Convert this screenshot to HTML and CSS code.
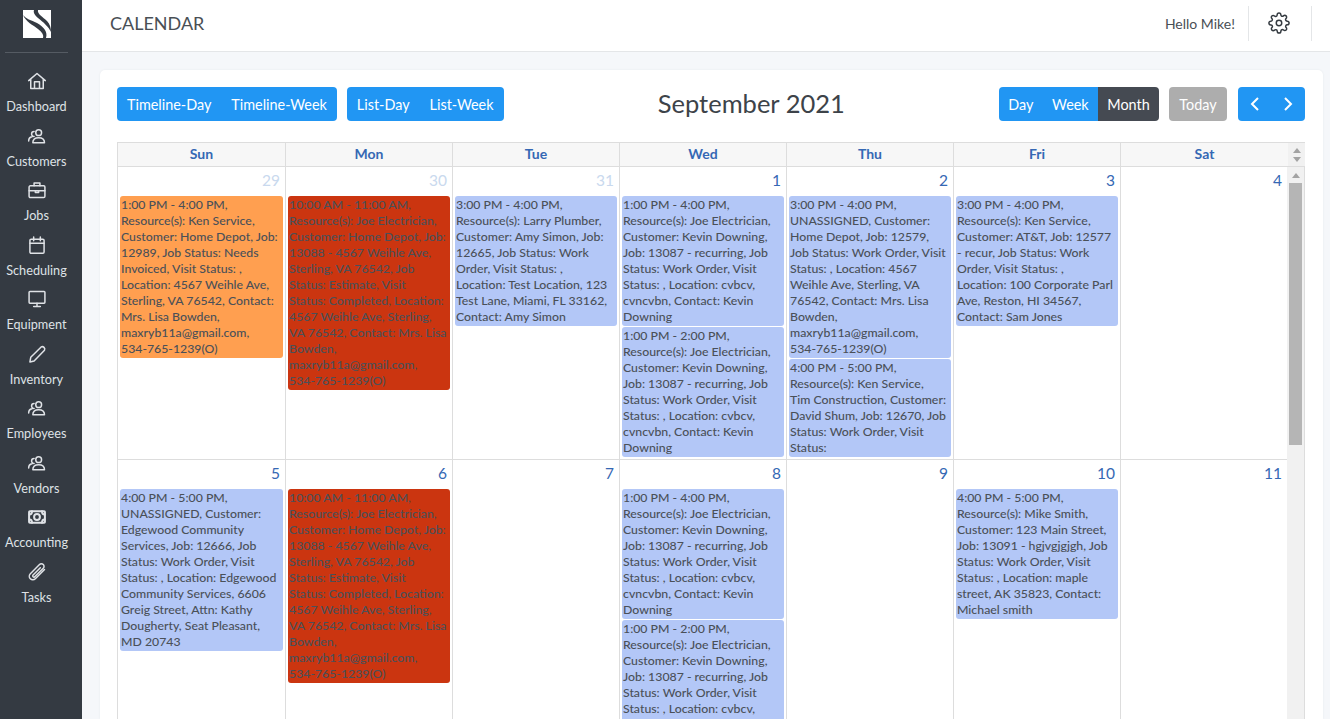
FILE: index.html
```html
<!DOCTYPE html>
<html lang="en">
<head>
<meta charset="utf-8">
<title>Calendar</title>
<link rel="stylesheet" href="styles.css">
</head>
<body>
<div class="app">
  <aside class="sidebar">
    <div class="logo">
      <svg viewBox="0 0 28 28" width="28" height="28"><rect width="28" height="28" fill="#fff"/><path d="M0 5C3 12 10 15 15 19C19 22 21 25 20 28H23C25 22 21 17 14 13C8 10 3 9 0 5Z" fill="#343a42"/><path d="M11 0H15C14 4 20 7 24 11C27 14 28 18 28 22C26 17 20 12 15 8C12 5 10 3 11 0Z" fill="#343a42"/></svg>
    </div>
    <nav class="nav">
      <a class="item"><svg viewBox="0 0 24 24" class="ico"><path d="M2 11.500 12 3l10 8.500M4.500 9.500V21h15V9.500M9 21v-8h6v8"/></svg><span>Dashboard</span></a>
      <a class="item"><svg viewBox="0 0 24 24" class="ico"><circle cx="14" cy="8" r="3.500"/><path d="M7 20c0-4 3-6 7-6s7 2 7 6H7M8.500 12.500a3 3 0 0 1 0-6M2 18c0-3 1.500-4.500 4-5"/></svg><span>Customers</span></a>
      <a class="item"><svg viewBox="0 0 24 24" class="ico"><rect x="2.500" y="7" width="19" height="14" rx="1.500"/><path d="M8.500 7V3.500h7V7M2.500 13h19M10 13v2h4v-2"/></svg><span>Jobs</span></a>
      <a class="item"><svg viewBox="0 0 24 24" class="ico"><rect x="3.500" y="5" width="17" height="17" rx="1.500"/><path d="M3.500 10h17M8 2.500V7M16 2.500V7"/></svg><span>Scheduling</span></a>
      <a class="item"><svg viewBox="0 0 24 24" class="ico"><rect x="2.500" y="3" width="19" height="14" rx="1"/><path d="M12 17v4M8 21h8"/></svg><span>Equipment</span></a>
      <a class="item"><svg viewBox="0 0 24 24" class="ico"><path d="M3.500 21.500l1-5.500L17 3.500a3 3 0 0 1 4 4L8.500 20.500l-5 1Z"/></svg><span>Inventory</span></a>
      <a class="item"><svg viewBox="0 0 24 24" class="ico"><circle cx="14" cy="8" r="3.500"/><path d="M7 20c0-4 3-6 7-6s7 2 7 6H7M8.500 12.500a3 3 0 0 1 0-6M2 18c0-3 1.500-4.500 4-5"/></svg><span>Employees</span></a>
      <a class="item"><svg viewBox="0 0 24 24" class="ico"><circle cx="14" cy="8" r="3.500"/><path d="M7 20c0-4 3-6 7-6s7 2 7 6H7M8.500 12.500a3 3 0 0 1 0-6M2 18c0-3 1.500-4.500 4-5"/></svg><span>Vendors</span></a>
      <a class="item"><svg viewBox="0 0 24 24" class="ico bill"><rect x="2.500" y="5" width="19" height="14" rx="1"/><circle cx="12" cy="12" r="3.500"/><path d="M3 9c2 0 3-1 3-4M21 9c-2 0-3-1-3-4M3 15c2 0 3 1 3 4M21 15c-2 0-3 1-3 4"/></svg><span>Accounting</span></a>
      <a class="item"><svg viewBox="0 0 24 24" class="ico"><path d="M21 9 10 20a4 4 0 0 1-6-6L15 3a3 3 0 0 1 4.500 4.500L9 18a1.500 1.500 0 0 1-2-2L16 7"/></svg><span>Tasks</span></a>
    </nav>
  </aside>
  <main class="main">
    <header class="topbar">
      <h1 class="title">CALENDAR</h1>
      <div class="user">
        <span class="hello">Hello Mike!</span>
        <span class="gear"><svg viewBox="0 0 24 24" width="22" height="22" fill="none" stroke="#343a40" stroke-width="1.600" stroke-linejoin="round"><circle cx="12" cy="12" r="3"/><path d="M19.4 15a1.65 1.65 0 0 0 .33 1.82l.06.06a2 2 0 0 1 0 2.83 2 2 0 0 1-2.83 0l-.06-.06a1.65 1.65 0 0 0-1.82-.33 1.65 1.65 0 0 0-1 1.51V21a2 2 0 0 1-2 2 2 2 0 0 1-2-2v-.09A1.65 1.65 0 0 0 9 19.4a1.65 1.65 0 0 0-1.82.33l-.06.06a2 2 0 0 1-2.83 0 2 2 0 0 1 0-2.83l.06-.06a1.65 1.65 0 0 0 .33-1.82 1.65 1.65 0 0 0-1.51-1H3a2 2 0 0 1-2-2 2 2 0 0 1 2-2h.09A1.65 1.65 0 0 0 4.600 9a1.65 1.65 0 0 0-.33-1.82l-.06-.06a2 2 0 0 1 0-2.83 2 2 0 0 1 2.830 0l.06.06a1.65 1.65 0 0 0 1.82.33H9a1.65 1.65 0 0 0 1-1.51V3a2 2 0 0 1 2-2 2 2 0 0 1 2 2v.09a1.65 1.65 0 0 0 1 1.51 1.65 1.65 0 0 0 1.82-.33l.06-.06a2 2 0 0 1 2.83 0 2 2 0 0 1 0 2.83l-.06.06a1.65 1.65 0 0 0-.33 1.82V9a1.65 1.65 0 0 0 1.51 1H21a2 2 0 0 1 2 2 2 2 0 0 1-2 2h-.09a1.65 1.65 0 0 0-1.51 1z"/></svg></span>
      </div>
    </header>
    <section class="content">
      <div class="card">
        <div class="toolbar">
          <div class="tgroup">
            <div class="btns"><button class="btn">Timeline-Day</button><button class="btn">Timeline-Week</button></div>
            <div class="btns"><button class="btn">List-Day</button><button class="btn">List-Week</button></div>
          </div>
          <h2 class="month">September 2021</h2>
          <div class="tgroup">
            <div class="btns views"><button class="btn">Day</button><button class="btn">Week</button><button class="btn active">Month</button></div>
            <button class="btn today">Today</button>
            <div class="btns"><button class="btn arrow"><svg viewBox="0 0 12 16" width="12" height="16"><path d="M9 2 3 8l6 6" fill="none" stroke="#fff" stroke-width="2"/></svg></button><button class="btn arrow"><svg viewBox="0 0 12 16" width="12" height="16"><path d="M3 2l6 6-6 6" fill="none" stroke="#fff" stroke-width="2"/></svg></button></div>
          </div>
        </div>
        <div class="cal">
          <div class="head">
            <div class="hc">Sun</div><div class="hc">Mon</div><div class="hc">Tue</div><div class="hc">Wed</div><div class="hc">Thu</div><div class="hc">Fri</div><div class="hc">Sat</div>
            <div class="sb-top"><i class="up"></i><i class="down"></i></div>
          </div>
          <div class="bodywrap">
            <div class="weeks">
              <div class="week">
                <div class="day"><div class="num other">29</div>
                  <div class="ev orange">1:00 PM - 4:00 PM,<br>Resource(s): Ken Service,<br>Customer: Home Depot, Job:<br>12989, Job Status: Needs<br>Invoiced, Visit Status: ,<br>Location: 4567 Weihle Ave,<br>Sterling, VA 76542, Contact:<br>Mrs. Lisa Bowden,<br>maxryb11a@gmail.com,<br>534-765-1239(O)</div></div>
                <div class="day"><div class="num other">30</div>
                  <div class="ev red">10:00 AM - 11:00 AM,<br>Resource(s): Joe Electrician,<br>Customer: Home Depot, Job:<br>13088 - 4567 Weihle Ave,<br>Sterling, VA 76542, Job<br>Status: Estimate, Visit<br>Status: Completed, Location:<br>4567 Weihle Ave, Sterling,<br>VA 76542, Contact: Mrs. Lisa<br>Bowden,<br>maxryb11a@gmail.com,<br>534-765-1239(O)</div></div>
                <div class="day"><div class="num other">31</div>
                  <div class="ev">3:00 PM - 4:00 PM,<br>Resource(s): Larry Plumber,<br>Customer: Amy Simon, Job:<br>12665, Job Status: Work<br>Order, Visit Status: ,<br>Location: Test Location, 123<br>Test Lane, Miami, FL 33162,<br>Contact: Amy Simon</div></div>
                <div class="day"><div class="num">1</div>
                  <div class="ev">1:00 PM - 4:00 PM,<br>Resource(s): Joe Electrician,<br>Customer: Kevin Downing,<br>Job: 13087 - recurring, Job<br>Status: Work Order, Visit<br>Status: , Location: cvbcv,<br>cvncvbn, Contact: Kevin<br>Downing</div>
                  <div class="ev">1:00 PM - 2:00 PM,<br>Resource(s): Joe Electrician,<br>Customer: Kevin Downing,<br>Job: 13087 - recurring, Job<br>Status: Work Order, Visit<br>Status: , Location: cvbcv,<br>cvncvbn, Contact: Kevin<br>Downing</div></div>
                <div class="day"><div class="num">2</div>
                  <div class="ev">3:00 PM - 4:00 PM,<br>UNASSIGNED, Customer:<br>Home Depot, Job: 12579,<br>Job Status: Work Order, Visit<br>Status: , Location: 4567<br>Weihle Ave, Sterling, VA<br>76542, Contact: Mrs. Lisa<br>Bowden,<br>maxryb11a@gmail.com,<br>534-765-1239(O)</div>
                  <div class="ev cut">4:00 PM - 5:00 PM,<br>Resource(s): Ken Service,<br>Tim Construction, Customer:<br>David Shum, Job: 12670, Job<br>Status: Work Order, Visit<br>Status:</div></div>
                <div class="day"><div class="num">3</div>
                  <div class="ev">3:00 PM - 4:00 PM,<br>Resource(s): Ken Service,<br>Customer: AT&amp;T, Job: 12577<br>- recur, Job Status: Work<br>Order, Visit Status: ,<br>Location: 100 Corporate Parl<br>Ave, Reston, HI 34567,<br>Contact: Sam Jones</div></div>
                <div class="day last"><div class="num">4</div></div>
              </div>
              <div class="week">
                <div class="day"><div class="num">5</div>
                  <div class="ev">4:00 PM - 5:00 PM,<br>UNASSIGNED, Customer:<br>Edgewood Community<br>Services, Job: 12666, Job<br>Status: Work Order, Visit<br>Status: , Location: Edgewood<br>Community Services, 6606<br>Greig Street, Attn: Kathy<br>Dougherty, Seat Pleasant,<br>MD 20743</div></div>
                <div class="day"><div class="num">6</div>
                  <div class="ev red">10:00 AM - 11:00 AM,<br>Resource(s): Joe Electrician,<br>Customer: Home Depot, Job:<br>13088 - 4567 Weihle Ave,<br>Sterling, VA 76542, Job<br>Status: Estimate, Visit<br>Status: Completed, Location:<br>4567 Weihle Ave, Sterling,<br>VA 76542, Contact: Mrs. Lisa<br>Bowden,<br>maxryb11a@gmail.com,<br>534-765-1239(O)</div></div>
                <div class="day"><div class="num">7</div></div>
                <div class="day"><div class="num">8</div>
                  <div class="ev">1:00 PM - 4:00 PM,<br>Resource(s): Joe Electrician,<br>Customer: Kevin Downing,<br>Job: 13087 - recurring, Job<br>Status: Work Order, Visit<br>Status: , Location: cvbcv,<br>cvncvbn, Contact: Kevin<br>Downing</div>
                  <div class="ev">1:00 PM - 2:00 PM,<br>Resource(s): Joe Electrician,<br>Customer: Kevin Downing,<br>Job: 13087 - recurring, Job<br>Status: Work Order, Visit<br>Status: , Location: cvbcv,<br>cvncvbn, Contact: Kevin<br>Downing</div></div>
                <div class="day"><div class="num">9</div></div>
                <div class="day"><div class="num">10</div>
                  <div class="ev">4:00 PM - 5:00 PM,<br>Resource(s): Mike Smith,<br>Customer: 123 Main Street,<br>Job: 13091 - hgjvgjgjgh, Job<br>Status: Work Order, Visit<br>Status: , Location: maple<br>street, AK 35823, Contact:<br>Michael smith</div></div>
                <div class="day last"><div class="num">11</div></div>
              </div>
            </div>
            <div class="scroll"><i class="up"></i><div class="thumb"></div></div>
          </div>
        </div>
      </div>
    </section>
  </main>
</div>
</body>
</html>
```

FILE: styles.css
```css
*{box-sizing:border-box}
html,body{margin:0;height:100%;overflow:hidden}
body{font-family:Lato,"Noto Sans",sans-serif;color:#343a40;background:#f5f7fa}
.app{display:flex;height:719px}
.sidebar{width:82px;flex:none;background:#343a42;padding-right:9px;display:flex;flex-direction:column;align-items:center}
.logo{width:63px;height:53px;border-bottom:1px solid #555b63;display:flex;justify-content:center;align-items:flex-start;padding-top:10px}
.nav{display:flex;flex-direction:column;width:100%;padding-top:18px}
.item{height:54.500px;display:flex;flex-direction:column;align-items:center;color:#dfe2e6;font-size:12.700px;line-height:16px}
.item span{margin-top:7px}
.ico{width:20px;height:20px;fill:none;stroke:#dfe2e6;stroke-width:1.800;stroke-linejoin:round;stroke-linecap:round}
.ico.bill{stroke-width:2.400}
.main{flex:1;min-width:0;display:flex;flex-direction:column}
.topbar{height:52px;flex:none;background:#fff;border-bottom:1px solid #e4e6e8;display:flex;align-items:center;justify-content:space-between;padding:0 18px 4px 28px}
.title{margin:0 0 2px;font-size:18px;font-weight:400;color:#494f55}
.user{display:flex;align-items:center;height:40px;font-size:14px;color:#494f55;margin-top:4px}
.hello{padding-right:13px;margin-top:-4px}
.gear{width:64px;height:35px;margin-top:-5px;padding-right:3px;border-left:1px solid #e4e6e8;border-right:1px solid #e4e6e8;display:flex;align-items:center;justify-content:center}
.content{flex:1;min-height:0;padding:18px 7px 0 18px;overflow:hidden}
.card{background:#fff;border-radius:5px 5px 0 0;box-shadow:0 0 2px #e4e7ea;height:100%;padding:17px 18px 0 17px;overflow:hidden}
.toolbar{display:flex;align-items:center;justify-content:space-between;height:34px;margin-bottom:21px}
.tgroup{display:flex;gap:10px}
.month{margin:0 0 2px;font-size:25.500px;font-weight:400;color:#3d4349}
.btns{display:flex;border-radius:4px;overflow:hidden}
.btn{border:0;background:#2196f3;color:#fff;font:inherit;font-size:14.400px;height:34px;padding:0 10px;white-space:nowrap}
.views .btn{padding:0 9.300px}
.btn.active{background:#454a52}
.btn.today{background:#adadad;border-radius:4px;width:58px;padding:0;margin-right:1px}
.btn.arrow{width:33.500px;padding:0;display:flex;align-items:center;justify-content:center}
.cal{border-right:1px solid #ddd}
.head{display:grid;grid-template-columns:168px 167px 167px 167px 167px 167px 167px 17px;height:25px;background:#f7f7f7;border:1px solid #ddd;border-right:0}
.hc{font-size:14px;font-weight:700;color:#3568b4;text-align:center;line-height:22px;border-right:1px solid #ddd}
.hc:nth-child(7){border-right:0}
.sb-top{background:#f1f1f1;display:flex;flex-direction:column;align-items:center;justify-content:center;gap:4px}
.up{display:block;width:0;height:0;border:4px solid transparent;border-top:0;border-bottom:5px solid #a3a3a3}
.down{display:block;width:0;height:0;border:4px solid transparent;border-bottom:0;border-top:5px solid #a3a3a3}
.bodywrap{display:flex;border-left:1px solid #ddd}
.weeks{flex:1;min-width:0}
.week{display:grid;grid-template-columns:168px 167px 167px 167px 167px 167px 1fr;height:293px;border-bottom:1px solid #ddd;overflow:hidden}
.week:nth-child(2){height:320px;border-bottom:0}
.day{border-right:1px solid #ddd;padding:0 2px;min-width:0}
.day.last{border-right:0}
.num{height:29px;text-align:right;font-size:15.500px;line-height:26px;color:#3568b4;padding-right:3px}
.num.other{color:#c9d9ee}
.ev{background:#b3c7f7;border-radius:3px;font-size:12.300px;font-weight:500;line-height:16px;padding:1px;margin-bottom:1px;color:#4a5058;white-space:nowrap;overflow:hidden}
.ev.orange{background:#ff9f50}
.ev.red{background:#cb3510}
.ev.cut{height:98px}
.scroll{width:17px;flex:none;background:#f1f1f1;display:flex;flex-direction:column;align-items:center}
.scroll .up{margin:6px 0 5px}
.thumb{width:13px;height:262px;background:#b5b5b5}
```
